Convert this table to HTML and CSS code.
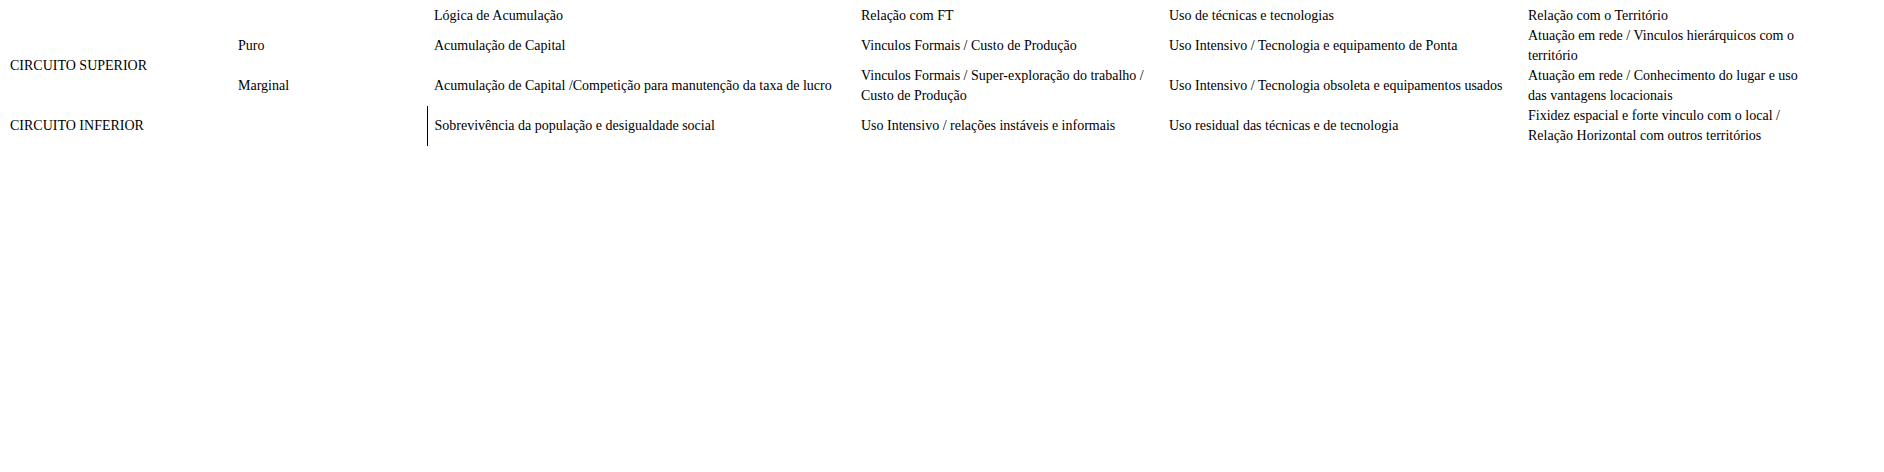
FILE: index.html
```html
<!DOCTYPE html>
<html lang="pt">
<head>
<meta charset="utf-8">
<title>Circuitos</title>
<link rel="stylesheet" href="styles.css">
</head>
<body>
<table class="grid">
  <colgroup>
    <col class="c1"><col class="c2"><col class="c3"><col class="c4"><col class="c5"><col class="c6">
  </colgroup>
  <tr class="head">
    <td></td>
    <td></td>
    <td>Lógica de Acumulação</td>
    <td>Relação com FT</td>
    <td>Uso de técnicas e tecnologias</td>
    <td>Relação com o Território</td>
  </tr>
  <tr class="row">
    <td rowspan="2">CIRCUITO SUPERIOR</td>
    <td>Puro</td>
    <td>Acumulação de Capital</td>
    <td>Vinculos Formais / Custo de Produção</td>
    <td>Uso Intensivo / Tecnologia e equipamento de Ponta</td>
    <td>Atuação em rede / Vinculos hierárquicos com o território</td>
  </tr>
  <tr class="row">
    <td>Marginal</td>
    <td>Acumulação de Capital /Competição para manutenção da taxa de lucro</td>
    <td>Vinculos Formais / Super-exploração do trabalho / Custo de Produção</td>
    <td>Uso Intensivo / Tecnologia obsoleta e equipamentos usados</td>
    <td>Atuação em rede / Conhecimento do lugar e uso das vantagens locacionais</td>
  </tr>
  <tr class="row">
    <td>CIRCUITO INFERIOR</td>
    <td></td>
    <td class="ruled">Sobrevivência da população e desigualdade social</td>
    <td>Uso Intensivo / relações instáveis e informais</td>
    <td>Uso residual das técnicas e de tecnologia</td>
    <td>Fixidez espacial e forte vinculo com o local / Relação Horizontal com outros territórios</td>
  </tr>
</table>
</body>
</html>
```
FILE: styles.css
```css
html, body {
  background: #ffffff;
}
body {
  margin: 8px;
  font-family: "Liberation Serif", "Times New Roman", serif;
  font-size: 14px;
  line-height: 20px;
  color: #000000;
}
.grid {
  table-layout: fixed;
  border-collapse: collapse;
  border-spacing: 0;
  margin-left: -5px;
  width: 1818px;
}
.c1 { width: 228px; }
.c2 { width: 196px; }
.c3 { width: 427px; }
.c4 { width: 308px; }
.c5 { width: 359px; }
.c6 { width: 300px; }
.grid td {
  padding: 0 7px;
  vertical-align: middle;
  text-align: left;
}
.head {
  height: 18px;
  line-height: 15px;
}
.grid .head td {
  vertical-align: top;
}
.row {
  height: 40px;
}
.grid td.ruled {
  border-left: 1px solid #000000;
}
```
